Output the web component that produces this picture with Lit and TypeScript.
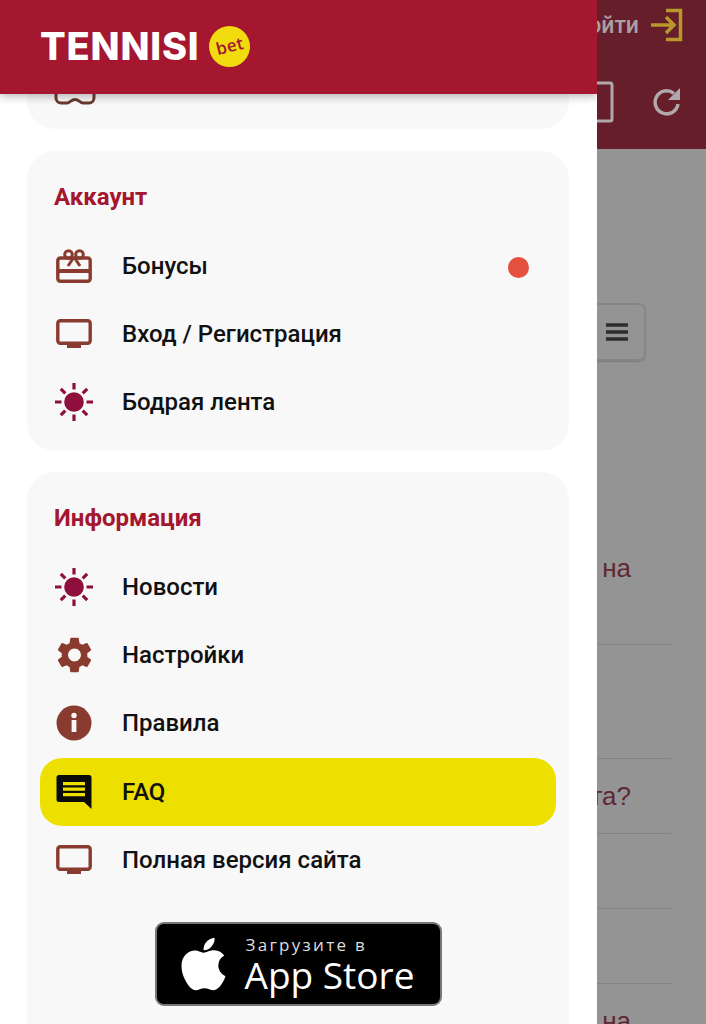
import { LitElement, html, css, svg } from "lit";
import { customElement } from "lit/decorators.js";

const BROWN = "#8a3b30";
const tv = svg`<svg viewBox="0 0 36 30" width="36" height="30"><rect x="1.800" y="1.800" width="32.400" height="22.400" rx="2.500" fill="none" stroke="${BROWN}" stroke-width="3.400"/><rect x="11" y="25" width="14" height="4" fill="${BROWN}"/></svg>`;
const sun = svg`<svg viewBox="0 0 40 40" width="40" height="40"><circle cx="20" cy="20" r="9.800" fill="#8e0f3c"/><g stroke="#8e0f3c" stroke-width="3.200"><path d="M20 1v6.500M20 32.500v6.500M1 20h6.500M32.500 20h6.500M6.800 6.800l4.500 4.500M28.700 28.700l4.500 4.500M6.800 33.200l4.500-4.500M28.700 11.300l4.500-4.500"/></g></svg>`;
const gift = svg`<svg viewBox="0 0 36 34" width="36" height="34"><rect x="1.800" y="9" width="32.400" height="23.200" rx="2.500" fill="none" stroke="${BROWN}" stroke-width="3.400"/><rect x="2" y="20" width="32" height="4" fill="${BROWN}"/><g fill="none" stroke="${BROWN}" stroke-width="3"><circle cx="12.500" cy="5.500" r="3.800"/><circle cx="23.500" cy="5.500" r="3.800"/><path d="M18 8l-6 9M18 8l6 9"/></g></svg>`;
const gear = svg`<svg viewBox="2.200 2 19.600 20" width="35" height="36"><path fill="${BROWN}" d="M19.140,12.940c0.040-0.300,0.060-0.610,0.060-0.940c0-0.320-0.020-0.640-0.070-0.940l2.030-1.580c0.180-0.140,0.230-0.410,0.120-0.610l-1.920-3.320c-0.120-0.220-0.370-0.290-0.590-0.220l-2.390,0.960c-0.500-0.380-1.030-0.700-1.620-0.940L14.400,2.810c-0.040-0.240-0.240-0.410-0.480-0.410h-3.840c-0.240,0-0.430,0.170-0.470,0.410L9.250,5.350C8.660,5.590,8.120,5.920,7.630,6.290L5.240,5.330c-0.220-0.080-0.470,0-0.590,0.220L2.740,8.870C2.620,9.080,2.660,9.340,2.860,9.480l2.030,1.580C4.840,11.360,4.800,11.690,4.800,12s0.020,0.640,0.070,0.940l-2.030,1.580c-0.180,0.140-0.230,0.410-0.120,0.610l1.920,3.320c0.120,0.220,0.370,0.290,0.590,0.220l2.390-0.960c0.500,0.380,1.030,0.700,1.620,0.940l0.360,2.540c0.050,0.240,0.240,0.410,0.480,0.410h3.840c0.240,0,0.440-0.170,0.470-0.410l0.360-2.540c0.590-0.240,1.130-0.560,1.620-0.940l2.390,0.960c0.220,0.080,0.470,0,0.590-0.220l1.920-3.320c0.120-0.220,0.070-0.470-0.120-0.610L19.140,12.940z M12,15.600c-1.980,0-3.600-1.620-3.600-3.600s1.620-3.600,3.600-3.600s3.600,1.620,3.600,3.600S13.980,15.600,12,15.600z"/></svg>`;
const info = svg`<svg viewBox="0 0 36 36" width="36" height="36"><circle cx="18" cy="18" r="17.500" fill="${BROWN}"/><rect x="15.600" y="15" width="4.800" height="12" fill="#f8f8f8"/><circle cx="18" cy="10.500" r="2.700" fill="#f8f8f8"/></svg>`;
const chat = svg`<svg viewBox="0 0 36 34" width="36" height="34"><path d="M3 0h30a2.500 2.500 0 0 1 2.500 2.500V34L28 27H3a2.500 2.500 0 0 1-2.500-2.500v-22A2.500 2.500 0 0 1 3 0z" fill="#0b0b0b"/><path d="M7 7h22v3.200H7zM7 12.500h22v3.200H7zM7 18h22v3.200H7z" fill="#ede000"/></svg>`;
const apple = svg`<svg viewBox="0 0 384 512" width="47" height="60"><path fill="#fff" d="M318.700 268.700c-.2-36.700 16.400-64.400 50-84.800-18.800-26.900-47.200-41.700-84.700-44.600-35.500-2.800-74.300 20.700-88.500 20.700-15 0-49.400-19.700-76.400-19.700C63.300 141.200 4 184.800 4 273.500q0 39.300 14.400 81.200c12.800 36.700 59 126.700 107.200 125.200 25.200-.6 43-17.900 75.800-17.900 31.800 0 48.300 17.900 76.400 17.900 48.600-.7 90.400-82.500 102.600-119.300-65.200-30.700-61.700-90-61.700-91.900zm-56.600-164.200c27.300-32.400 24.800-61.900 24-72.500-24.100 1.400-52 16.400-67.900 34.900-17.500 19.800-27.800 44.300-25.600 71.900 26.100 2 49.900-11.400 69.500-34.300z"/></svg>`;
const vr = svg`<svg viewBox="0 0 42 12" width="42" height="12"><path d="M2 0v4a5 5 0 0 0 5 5h6c3 0 4-3.500 8-3.500s5 3.500 8 3.500h6a5 5 0 0 0 5-5V0" fill="none" stroke="#6b3a30" stroke-width="3"/></svg>`;

const account = [
  { icon: gift, label: "Бонусы", dot: true },
  { icon: tv, label: "Вход / Регистрация" },
  { icon: sun, label: "Бодрая лента" },
];
const infoRows = [
  { icon: sun, label: "Новости" },
  { icon: gear, label: "Настройки" },
  { icon: info, label: "Правила" },
  { icon: chat, label: "FAQ", active: true },
  { icon: tv, label: "Полная версия сайта" },
];
type Row = { icon: unknown; label: string; dot?: boolean; active?: boolean };

@customElement("app-root")
export class AppRoot extends LitElement {
  static styles = css`
    :host { display: block; width: 706px; height: 1024px; position: relative; overflow: hidden; background: #949494; font-family: Roboto, sans-serif; }
    .back { display: flex; flex-direction: column; height: 100%; }
    .appbar { height: 149px; flex: none; background: #651e2a; display: flex; flex-direction: column; align-items: flex-end; padding-right: 24px; box-sizing: border-box; }
    .signin { height: 50px; display: flex; align-items: center; gap: 12px; color: #a9a1a3; font: 500 23px Roboto, sans-serif; margin-right: -1px; }
    .tools { display: flex; align-items: center; gap: 38px; margin-top: 31px; }
    .tools svg { display: block; }
    .filter-row { display: flex; justify-content: flex-end; padding: 154px 60px 0 0; }
    .filter { width: 90px; height: 58px; box-sizing: border-box; border: 2px solid #868686; border-radius: 7px; box-shadow: 0 1px 1px #7e7e7e; display: flex; align-items: center; justify-content: flex-end; padding-right: 16px; }
    .list { padding-right: 35px; margin-top: 144px; font: 26px/30px "Liberation Sans", sans-serif; color: #5f2733; }
    .item { box-sizing: border-box; height: 75px; flex: none; border-bottom: 1.5px solid #838383; display: flex; align-items: flex-start; justify-content: flex-end; padding: 22px 40px 0 0; }
    .i1 { height: 140px; padding-top: 48px; }
    .i2 { height: 114px; }

    .drawer { position: absolute; left: 0; top: 0; bottom: 0; width: 597px; background: #fff; display: flex; flex-direction: column; overflow: hidden; }
    .head { height: 94px; flex: none; background: #a4172f; box-shadow: 0 2px 9px rgba(0,0,0,.3); position: relative; z-index: 1; display: flex; align-items: center; padding: 0 0 2px 40px; box-sizing: border-box; gap: 10px; }
    .logo { color: #fff; font: 800 38px Inter, sans-serif; letter-spacing: .8px; line-height: 1; }
    .badge { width: 41px; height: 41px; border-radius: 50%; background: #f2dc10; display: flex; align-items: center; justify-content: center; color: #a4172f; font: 600 17px "Open Sans", sans-serif; }
    .badge span { display: block; transform: rotate(-14deg) translateY(-1px); letter-spacing: .3px; }
    .body { flex: 1; padding: 0 28px 0 27px; display: flex; flex-direction: column; gap: 22px; min-height: 0; }
    .card { background: #f8f8f8; border-radius: 28px; padding: 0 13px; flex: none; }
    .peek { height: 35px; padding-left: 27px; box-sizing: border-box; border-radius: 0 0 28px 28px; }
    .peek svg { display: block; }
    .acc { height: 300px; }
    .inf { height: 600px; margin-top: -1px; }
    h2 { margin: 0; padding: 29px 0 0 14px; height: 81px; box-sizing: border-box; font: 700 24px/34px Roboto, sans-serif; color: #a4172f; }
    .row { height: 68.200px; display: flex; align-items: center; border-radius: 22px; color: #111; font: 500 24px Roboto, sans-serif; }
    .row.active { background: #ede000; }
    .ic { width: 40px; margin: 0 28px 0 14px; display: flex; justify-content: center; flex: none; }
    .ic svg { display: block; }
    .lbl { flex: 1; }
    .dot { width: 21px; height: 21px; border-radius: 50%; background: #e5503f; margin: 2px 27px 0 0; }
    .storewrap { display: flex; justify-content: center; padding-top: 28px; }
    .store { width: 287px; height: 84px; box-sizing: border-box; background: #000; border: 2px solid #777; border-radius: 9px; display: flex; align-items: center; padding-left: 23px; gap: 18px; color: #fff; }
    .st { display: flex; flex-direction: column; font-family: "Open Sans", sans-serif; padding-top: 3px; }
    .st1 { font-size: 17px; line-height: 20px; letter-spacing: 2.300px; color: #ddd; margin-left: 1px; }
    .st2 { font-size: 37px; font-weight: 500; line-height: 40px; letter-spacing: 0; }
  `;

  private row(r: Row) {
    return html`<div class="row ${r.active ? "active" : ""}">
      <div class="ic">${r.icon}</div>
      <div class="lbl">${r.label}</div>
      ${r.dot ? html`<div class="dot"></div>` : ""}
    </div>`;
  }

  render() {
    return html`
      <div class="back">
        <div class="appbar">
          <div class="signin"><span>Войти</span>
            <svg viewBox="0 0 32 34" width="32" height="34"><path d="M15 2.500h14.500v29H15" fill="none" stroke="#b8982a" stroke-width="3.500"/><path d="M0 17h23M15 9l8 8-8 8" fill="none" stroke="#b8982a" stroke-width="3.500"/></svg>
          </div>
          <div class="tools">
            <svg viewBox="0 0 24 42" width="24" height="42"><path d="M2 2h18a2 2 0 0 1 2 2v34a2 2 0 0 1-2 2H2" fill="none" stroke="#b0a8aa" stroke-width="3"/></svg>
            <svg viewBox="0 0 30 30" width="30" height="30"><path d="M26 17a11.500 11.500 0 1 1-4-10.500" fill="none" stroke="#b0a8aa" stroke-width="3.500"/><path d="M28 1v12H16z" fill="#b0a8aa"/></svg>
          </div>
        </div>
        <div class="filter-row">
          <div class="filter"><svg viewBox="0 0 22 18" width="22" height="18"><path d="M0 2h22M0 9h22M0 16h22" stroke="#2c2c2c" stroke-width="3.500"/></svg></div>
        </div>
        <div class="list">
          <div class="item i1"><span>на</span></div>
          <div class="item i2"></div>
          <div class="item"><span>та?</span></div>
          <div class="item"></div>
          <div class="item"></div>
          <div class="item"><span>на</span></div>
        </div>
      </div>
      <div class="drawer">
        <div class="head">
          <div class="logo">TENNISI</div>
          <div class="badge"><span>bet</span></div>
        </div>
        <div class="body">
          <div class="card peek">${vr}</div>
          <div class="card acc">
            <h2>Аккаунт</h2>
            ${account.map((r) => this.row(r))}
          </div>
          <div class="card inf">
            <h2>Информация</h2>
            ${infoRows.map((r) => this.row(r))}
            <div class="storewrap">
              <div class="store">
                ${apple}
                <div class="st"><span class="st1">Загрузите в</span><span class="st2">App Store</span></div>
              </div>
            </div>
          </div>
        </div>
      </div>
    `;
  }
}
